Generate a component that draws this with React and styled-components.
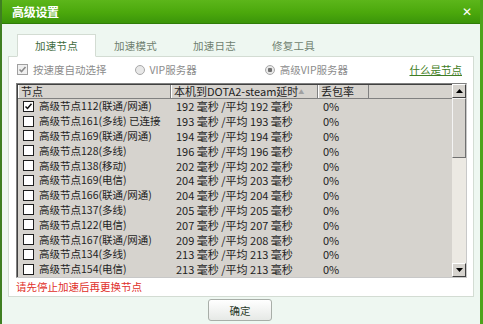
import React from 'react'
import styled, { createGlobalStyle } from 'styled-components'

const GlobalStyle = createGlobalStyle`
    html, body {
        margin: 0;
        padding: 0;
        background: #eef7f1;
    }
    body {
        font-family: "Noto Sans CJK SC", "Noto Sans", sans-serif;
        font-size: 11px;
        color: #1e1e1e;
    }
`

const rows = [
    { name: '高级节点112(联通/网通)', ping: 192, avg: 192, checked: true },
    { name: '高级节点161(多线) 已连接', ping: 193, avg: 193 },
    { name: '高级节点169(联通/网通)', ping: 194, avg: 194 },
    { name: '高级节点128(多线)', ping: 196, avg: 196 },
    { name: '高级节点138(移动)', ping: 202, avg: 202 },
    { name: '高级节点169(电信)', ping: 204, avg: 203 },
    { name: '高级节点166(联通/网通)', ping: 204, avg: 204 },
    { name: '高级节点137(多线)', ping: 205, avg: 205 },
    { name: '高级节点122(电信)', ping: 207, avg: 207 },
    { name: '高级节点167(联通/网通)', ping: 209, avg: 208 },
    { name: '高级节点134(多线)', ping: 213, avg: 213 },
    { name: '高级节点154(电信)', ping: 213, avg: 213 },
    { name: '高级节点150(电信)', ping: 216, avg: 216 },
]

const tabs = ['加速节点', '加速模式', '加速日志', '修复工具']

function App() {
    return (
        <>
            <GlobalStyle />
            <Window>
                <TitleBar>
                    <Title>高级设置</Title>
                    <Close>✕</Close>
                </TitleBar>
                <Body>
                    <TabBar>
                        {tabs.map((t, i) => (
                            <Tab key={t} active={i === 0}>{t}</Tab>
                        ))}
                    </TabBar>
                    <Panel>
                        <Options>
                            <Option>
                                <GrayCheck>
                                    <svg width="9" height="9" viewBox="0 0 9 9">
                                        <path d="M1.5 4.5 L3.5 6.5 L7.5 2" stroke="#8a8a8a" strokeWidth="1.6" fill="none" />
                                    </svg>
                                </GrayCheck>
                                按速度自动选择
                            </Option>
                            <Option gapLeft={28}>
                                <Radio />
                                VIP服务器
                            </Option>
                            <Option gapLeft={68}>
                                <Radio on />
                                高级VIP服务器
                            </Option>
                            <HelpLink>什么是节点</HelpLink>
                        </Options>
                        <ListView>
                            <ListArea>
                                <HeaderRow>
                                    <HeaderCell>节点</HeaderCell>
                                    <HeaderCell>
                                        本机到DOTA2-steam延时
                                        <SortMark>▲</SortMark>
                                    </HeaderCell>
                                    <HeaderCell>丢包率</HeaderCell>
                                    <HeaderCell last />
                                </HeaderRow>
                                {rows.map((r, i) => (
                                    <Row key={i}>
                                        <NameCell>
                                            <Box>
                                                {r.checked && (
                                                    <svg width="9" height="9" viewBox="0 0 9 9">
                                                        <path d="M1.5 4.5 L3.5 6.5 L7.5 1.8" stroke="#111" strokeWidth="1.5" fill="none" />
                                                    </svg>
                                                )}
                                            </Box>
                                            {r.name}
                                        </NameCell>
                                        <Cell>{r.ping} 毫秒 /平均 {r.avg} 毫秒</Cell>
                                        <Cell>0%</Cell>
                                    </Row>
                                ))}
                            </ListArea>
                            <ScrollBar>
                                <ScrollButton>
                                    <svg width="7" height="4" viewBox="0 0 7 4"><path d="M0 4 L3.5 0 L7 4 Z" fill="#000" /></svg>
                                </ScrollButton>
                                <Thumb />
                                <Track />
                                <ScrollButton>
                                    <svg width="7" height="4" viewBox="0 0 7 4"><path d="M0 0 L3.5 4 L7 0 Z" fill="#000" /></svg>
                                </ScrollButton>
                            </ScrollBar>
                        </ListView>
                        <Hint>请先停止加速后再更换节点</Hint>
                    </Panel>
                    <Footer>
                        <OkButton>确定</OkButton>
                    </Footer>
                </Body>
            </Window>
        </>
    )
}

export default App

const Window = styled.div`
    width: 483px;
    height: 324px;
    box-sizing: border-box;
    border-left: 2px solid #3f7f22;
    border-right: 3px solid #4da41c;
    display: flex;
    flex-direction: column;
    overflow: hidden;
`

const TitleBar = styled.div`
    height: 24px;
    flex-shrink: 0;
    background: linear-gradient(to bottom, #5cb61a 0%, #4ba80c 55%, #3b950a 100%);
    border-bottom: 1px solid #2f7d08;
    box-sizing: border-box;
    display: flex;
    align-items: center;
    justify-content: space-between;
    padding: 0 8px 0 10px;
`

const Title = styled.div`
    color: #ffffff;
    font-weight: bold;
    font-size: 12px;
    letter-spacing: -0.3px;
`

const Close = styled.div`
    color: #ffffff;
    font-weight: bold;
    font-size: 12px;
    font-family: "DejaVu Sans", sans-serif;
`

const Body = styled.div`
    flex: 1;
    display: flex;
    flex-direction: column;
    padding: 10px 6px 0 6px;
    background: #eef7f1;
`

const TabBar = styled.div`
    display: flex;
    padding-left: 9px;
    height: 23px;
    position: relative;
    z-index: 1;
    margin-bottom: -1px;
`

const Tab = styled.div`
    width: 79px;
    height: 23px;
    box-sizing: border-box;
    display: flex;
    align-items: center;
    justify-content: center;
    font-size: 10.5px;
    letter-spacing: 0.3px;
    color: ${p => (p.active ? '#3e6b3e' : '#6f7f6f')};
    background: ${p => (p.active ? '#ffffff' : 'transparent')};
    border: 1px solid ${p => (p.active ? '#d3dcd3' : 'transparent')};
    border-bottom-color: ${p => (p.active ? '#ffffff' : 'transparent')};
`

const Panel = styled.div`
    height: 241px;
    box-sizing: border-box;
    background: #ffffff;
    border: 1px solid #d3dcd3;
    padding: 0 6px 0 7px;
    display: flex;
    flex-direction: column;
`

const Options = styled.div`
    height: 26px;
    display: flex;
    align-items: center;
    padding-left: 1px;
    padding-bottom: 1px;
    box-sizing: border-box;
`

const Option = styled.div`
    display: flex;
    align-items: center;
    gap: 5px;
    margin-left: ${p => p.gapLeft || 0}px;
    color: #8c8c8c;
    font-size: 10.5px;
`

const GrayCheck = styled.div`
    width: 9px;
    height: 9px;
    border: 1px solid #a0a0a0;
    background: #f0f0f0;
    display: flex;
    align-items: center;
    justify-content: center;
`

const Radio = styled.div`
    width: 8px;
    height: 8px;
    border-radius: 50%;
    border: 1px solid #a8a8a8;
    background: ${p => (p.on ? 'radial-gradient(circle, #707070 0 2px, #e8e8e8 2.5px)' : '#e8e8e8')};
`

const HelpLink = styled.a`
    margin-left: auto;
    margin-right: 5px;
    color: #3f7d25;
    font-size: 10.5px;
    text-decoration: underline;
    cursor: pointer;
`

const ListView = styled.div`
    height: 195px;
    box-sizing: border-box;
    border: 1px solid #808080;
    border-right-color: #c8c8c8;
    border-bottom-color: #c8c8c8;
    box-shadow: inset 1px 1px 0 #404040;
    background: #d6d3ce;
    display: flex;
    overflow: hidden;
`

const ListArea = styled.div`
    flex: 1;
    overflow: hidden;
    padding: 1px 0 0 1px;
`

const grid = `
    display: grid;
    grid-template-columns: 153px 147px 51px 1fr;
`

const HeaderRow = styled.div`
    ${grid}
    height: 13px;
    border-bottom: 1px solid #808080;
    background: #d6d3ce;
`

const HeaderCell = styled.div`
    display: flex;
    align-items: center;
    padding-left: 3px;
    font-size: 11px;
    line-height: 13px;
    color: #1e1e1e;
    border-right: ${p => (p.last ? 'none' : '1px solid #808080')};
    box-shadow: ${p => (p.last ? 'none' : 'inset 1px 0 0 #ffffff')};
    white-space: nowrap;
`

const SortMark = styled.span`
    margin-left: auto;
    margin-right: 18px;
    font-size: 6px;
    color: #a0a0a0;
`

const Row = styled.div`
    ${grid}
    height: 14.8px;
    align-items: center;
    white-space: nowrap;
`

const Cell = styled.div`
    padding-left: 5px;
    font-size: 11px;
    line-height: 14px;
    overflow: hidden;
`

const NameCell = styled(Cell)`
    display: flex;
    align-items: center;
    gap: 5px;
    padding-left: 5px;
    font-size: 10.5px;
`

const Box = styled.div`
    width: 9px;
    height: 9px;
    flex-shrink: 0;
    border: 1px solid #1e1e1e;
    background: #ffffff;
    display: flex;
    align-items: center;
    justify-content: center;
`

const ScrollBar = styled.div`
    width: 14px;
    display: flex;
    flex-direction: column;
    background: #ece9e3;
`

const ScrollButton = styled.div`
    height: 14px;
    flex-shrink: 0;
    box-sizing: border-box;
    background: #d6d3ce;
    border: 1px solid;
    border-color: #ffffff #404040 #404040 #ffffff;
    display: flex;
    align-items: center;
    justify-content: center;
`

const Thumb = styled(ScrollButton)`
    height: 60px;
    border-color: #f4f4f4 #707070 #707070 #f4f4f4;
`

const Track = styled.div`
    flex: 1;
`

const Hint = styled.div`
    color: #e0302a;
    font-size: 10.5px;
    padding-top: 1px;
    height: 16px;
    line-height: 16px;
`

const Footer = styled.div`
    flex: 1;
    display: flex;
    justify-content: center;
    align-items: flex-start;
    padding-top: 2px;
    padding-right: 2px;
`

const OkButton = styled.button`
    width: 64px;
    height: 22px;
    border: 1px solid #a8aea8;
    border-radius: 3px;
    background: linear-gradient(to bottom, #ffffff, #e6e9e6);
    font-family: "Noto Sans CJK SC", sans-serif;
    font-size: 10.5px;
    color: #2a3a2a;
    padding: 0;
    cursor: pointer;
`
